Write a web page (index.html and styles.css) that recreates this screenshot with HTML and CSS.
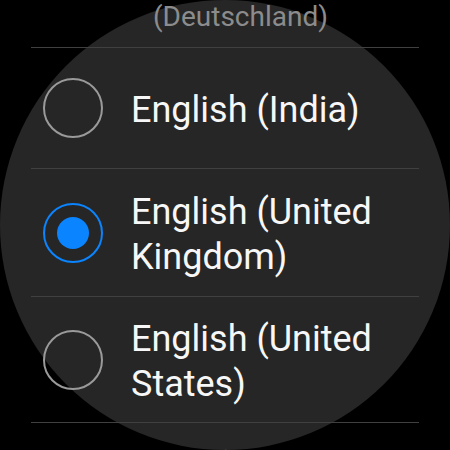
FILE: index.html
```html
<!DOCTYPE html>
<html lang="en">
<head>
<meta charset="utf-8">
<title>Language</title>
<link rel="stylesheet" href="styles.css">
</head>
<body>
<div class="watch">
  <ul class="list">
    <li class="item faded first"><span class="faded-label">(Deutschland)</span></li>
    <li class="item row-india">
      <span class="radio"></span>
      <span class="label">English (India)</span>
    </li>
    <li class="item row-uk">
      <span class="radio checked"><span class="dot"></span></span>
      <span class="label">English (United Kingdom)</span>
    </li>
    <li class="item row-us">
      <span class="radio"></span>
      <span class="label">English (United States)</span>
    </li>
    <li class="item faded last"><span class="faded-label">Español</span></li>
  </ul>
</div>
</body>
</html>
```

FILE: styles.css
```css
html, body {
  margin: 0;
  padding: 0;
  background: #000;
  width: 450px;
  height: 450px;
  overflow: hidden;
}

.watch {
  width: 450px;
  height: 450px;
  border-radius: 50%;
  background: #262626;
  font-family: Roboto, "Noto Sans", sans-serif;
}

.list {
  list-style: none;
  margin: 0;
  padding: 0;
}

.item {
  box-sizing: border-box;
  margin: 0 31px;
  display: flex;
  align-items: center;
  border-top: 1px solid #404040;
}

.item.first {
  border-top: none;
  height: 47px;
  align-items: flex-start;
}

.faded {
  padding-left: 122px;
}

.faded-label {
  font-size: 28px;
  line-height: 34px;
  color: #8c8c8c;
}

.item.last {
  padding-top: 22px;
  align-items: flex-start;
}

.row-india { height: 121px; }
.row-uk { height: 128px; }
.row-us { height: 126px; }

.radio {
  flex: none;
  box-sizing: border-box;
  width: 60px;
  height: 60px;
  margin-left: 12px;
  border: 2px solid #9a9a9a;
  border-radius: 50%;
  display: flex;
  align-items: center;
  justify-content: center;
}

.radio.checked {
  border-color: #0a84ff;
}

.dot {
  width: 32px;
  height: 32px;
  border-radius: 50%;
  background: #0a84ff;
}

.label {
  margin-left: 28px;
  padding-top: 4px;
  font-size: 36px;
  line-height: 45px;
  color: #f7f7f7;
}
```
